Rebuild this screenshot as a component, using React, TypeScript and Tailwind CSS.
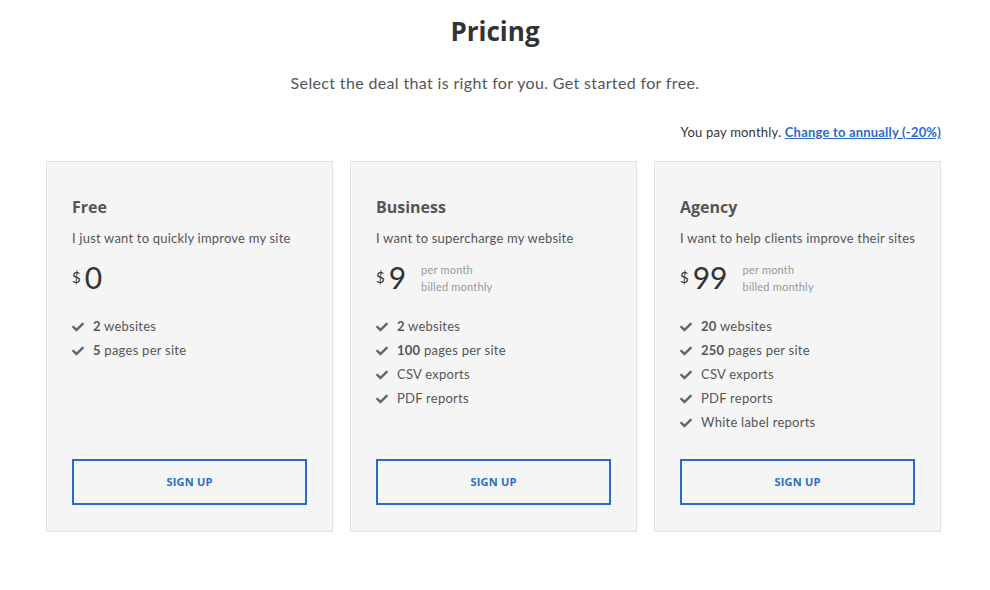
import React from "react";
import { FaCheck } from "react-icons/fa";

type Plan = {
  name: string;
  desc: string;
  price: string;
  monthly: boolean;
  features: { b?: string; t: string }[];
};

const plans: Plan[] = [
  {
    name: "Free",
    desc: "I just want to quickly improve my site",
    price: "0",
    monthly: false,
    features: [
      { b: "2", t: " websites" },
      { b: "5", t: " pages per site" },
    ],
  },
  {
    name: "Business",
    desc: "I want to supercharge my website",
    price: "9",
    monthly: true,
    features: [
      { b: "2", t: " websites" },
      { b: "100", t: " pages per site" },
      { t: "CSV exports" },
      { t: "PDF reports" },
    ],
  },
  {
    name: "Agency",
    desc: "I want to help clients improve their sites",
    price: "99",
    monthly: true,
    features: [
      { b: "20", t: " websites" },
      { b: "250", t: " pages per site" },
      { t: "CSV exports" },
      { t: "PDF reports" },
      { t: "White label reports" },
    ],
  },
];

export default function App() {
  return (
    <div
      className="w-[990px] h-[590px] bg-white text-[#555]"
      style={{ fontFamily: "Lato, 'Noto Sans', sans-serif" }}
    >
      <div className="pt-[14px] flex flex-col items-center">
        <h1
          className="text-[26px] leading-[34px] font-bold text-[#333]"
          style={{ fontFamily: "'Open Sans', Inter, sans-serif" }}
        >
          Pricing
        </h1>
        <p className="mt-[24px] text-[16px] leading-[22px] text-[#555] tracking-[0.35px]">
          Select the deal that is right for you. Get started for free.
        </p>
      </div>
      <div className="mx-[46px] w-[895px]">
        <div className="mt-[29px] flex justify-end text-[13px] leading-[18px] text-[#333] tracking-[0.2px]">
          <span>You pay monthly.&nbsp;</span>
          <a className="font-bold text-[#2a6bc8] underline" href="#">
            Change to annually (-20%)
          </a>
        </div>
        <div className="mt-[20px] flex gap-[17px]">
          {plans.map((p) => (
            <div
              key={p.name}
              className="w-[287px] h-[371px] bg-[#f5f5f5] border border-[#e2e2e2] px-[25px] pt-[34px] flex flex-col"
            >
              <div
                className="text-[16px] leading-[22px] font-bold text-[#555]"
                style={{ fontFamily: "'Open Sans', Inter, sans-serif" }}
              >
                {p.name}
              </div>
              <div className="mt-[11px] text-[13px] leading-[18px] text-[#555] tracking-[0.2px] whitespace-nowrap">
                {p.desc}
              </div>
              <div className="mt-[14px] flex items-start h-[38px]">
                <span className="text-[15px] leading-[18px] text-[#333] mt-[7px]">$</span>
                <span className="ml-[4px] text-[30px] leading-[32px] text-[#333]">
                  {p.price}
                </span>
                {p.monthly && (
                  <div className="ml-[15px] text-[11px] leading-[17px] text-[#999] tracking-[0.2px]">
                    <div>per month</div>
                    <div>billed monthly</div>
                  </div>
                )}
              </div>
              <ul className="mt-[16px] flex flex-col">
                {p.features.map((f, i) => (
                  <li
                    key={i}
                    className="flex items-center h-[24px] text-[13px] text-[#555] tracking-[0.25px]"
                  >
                    <FaCheck className="w-[12px] h-[12px] text-[#666] mr-[9px]" />
                    <span>
                      {f.b && <b className="font-bold">{f.b}</b>}
                      {f.t}
                    </span>
                  </li>
                ))}
              </ul>
              <div className="mt-auto mb-[26px]">
                <button
                  className="w-[235px] h-[46px] border-2 border-[#2a6bc8] text-[#2a6bc8] text-[11px] font-bold tracking-[0.2px]"
                  style={{ fontFamily: "'Open Sans', Inter, sans-serif" }}
                >
                  SIGN UP
                </button>
              </div>
            </div>
          ))}
        </div>
      </div>
    </div>
  );
}
